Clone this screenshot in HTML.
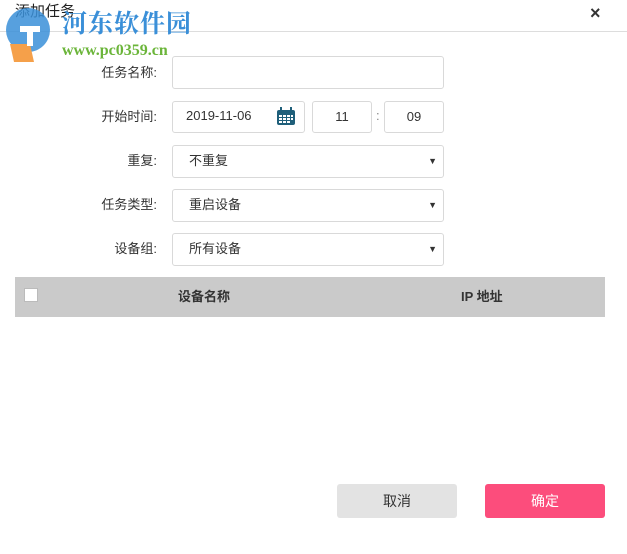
<!DOCTYPE html>
<html><head><meta charset="utf-8"><style>
body{margin:0;width:627px;height:554px;background:#fff;font-family:"Liberation Sans","Noto Sans CJK SC",sans-serif;position:relative;overflow:hidden;font-size:13px;color:#333;line-height:1.15}
.a{position:absolute}
.lbl{position:absolute;right:470px;font-size:13px;color:#333}
.box{position:absolute;border:1px solid #d9d9d9;border-radius:3px;box-sizing:border-box;background:#fff}
.sel{left:172px;width:272px;height:33px}
.sel span{position:absolute;left:16px;top:8px}
.sel i{position:absolute;right:6px;top:10px;font-style:normal;font-size:9px}
</style></head><body>
<div class="a" style="left:0;top:31px;width:627px;height:1px;background:#ddd"></div>
<div class="a" style="left:15px;top:3px;font-size:15px;color:#222">添加任务</div>
<div class="a" style="left:590px;top:3px;font-size:18px;font-weight:bold">×</div>
<svg class="a" style="left:0;top:4px" width="60" height="58"><circle cx="28" cy="26" r="22" fill="#3a8fd8" opacity=".85"/><path d="M10 40 L30 40 L34 58 L14 58Z" fill="#f5a04a"/><path d="M20 22 h20 v6 h-7 v14 h-6 v-14 h-7z" fill="#fff"/></svg>
<div class="a" style="left:62px;top:8px;font-size:25px;font-weight:bold;color:#3a8fd8;font-family:'Noto Serif CJK SC',serif;letter-spacing:1px">河东软件园</div>
<div class="a" style="left:62px;top:42px;font-size:16px;font-weight:bold;color:#6bb53a;font-family:'Liberation Serif',serif">www.pc0359.cn</div>

<div class="lbl" style="top:66px">任务名称:</div>
<div class="box" style="left:172px;top:56px;width:272px;height:33px"></div>

<div class="lbl" style="top:110px">开始时间:</div>
<div class="box" style="left:172px;top:101px;width:133px;height:32px"><span class="a" style="left:13px;top:7px">2019-11-06</span>
<svg class="a" style="left:103px;top:5px" width="20" height="19"><rect x="1" y="3" width="18" height="15" rx="2" fill="#1f5f7a"/><rect x="4" y="0" width="2" height="5" fill="#1f5f7a"/><rect x="14" y="0" width="2" height="5" fill="#1f5f7a"/><g fill="#fff"><rect x="3" y="8" width="3" height="2"/><rect x="7" y="8" width="3" height="2"/><rect x="11" y="8" width="3" height="2"/><rect x="15" y="8" width="2" height="2"/><rect x="3" y="11" width="3" height="2"/><rect x="7" y="11" width="3" height="2"/><rect x="11" y="11" width="3" height="2"/><rect x="15" y="11" width="2" height="2"/><rect x="3" y="14" width="3" height="2"/><rect x="7" y="14" width="3" height="2"/><rect x="11" y="14" width="3" height="2"/></g></svg></div>
<div class="box" style="left:312px;top:101px;width:60px;height:32px;text-align:center;line-height:30px">11</div>
<div class="a" style="left:376px;top:109px;color:#888">:</div>
<div class="box" style="left:384px;top:101px;width:60px;height:32px;text-align:center;line-height:30px">09</div>

<div class="lbl" style="top:154px">重复:</div>
<div class="box sel" style="top:145px"><span>不重复</span><i>▼</i></div>
<div class="lbl" style="top:198px">任务类型:</div>
<div class="box sel" style="top:189px"><span>重启设备</span><i>▼</i></div>
<div class="lbl" style="top:242px">设备组:</div>
<div class="box sel" style="top:233px"><span>所有设备</span><i>▼</i></div>

<div class="a" style="left:15px;top:277px;width:590px;height:40px;background:#cacaca"></div>
<div class="a" style="left:24px;top:288px;width:12px;height:12px;background:#fff;border:1px solid #bbb"></div>
<div class="a" style="left:178px;top:290px;font-weight:bold;color:#333">设备名称</div>
<div class="a" style="left:461px;top:290px;font-weight:bold;color:#333">IP 地址</div>

<div class="a" style="left:337px;top:484px;width:120px;height:34px;background:#e3e3e3;border-radius:3px;text-align:center;line-height:34px;font-size:14px">取消</div>
<div class="a" style="left:485px;top:484px;width:120px;height:34px;background:#fc4d7c;border-radius:3px;text-align:center;line-height:34px;font-size:14px;color:#fff">确定</div>
</body></html>
